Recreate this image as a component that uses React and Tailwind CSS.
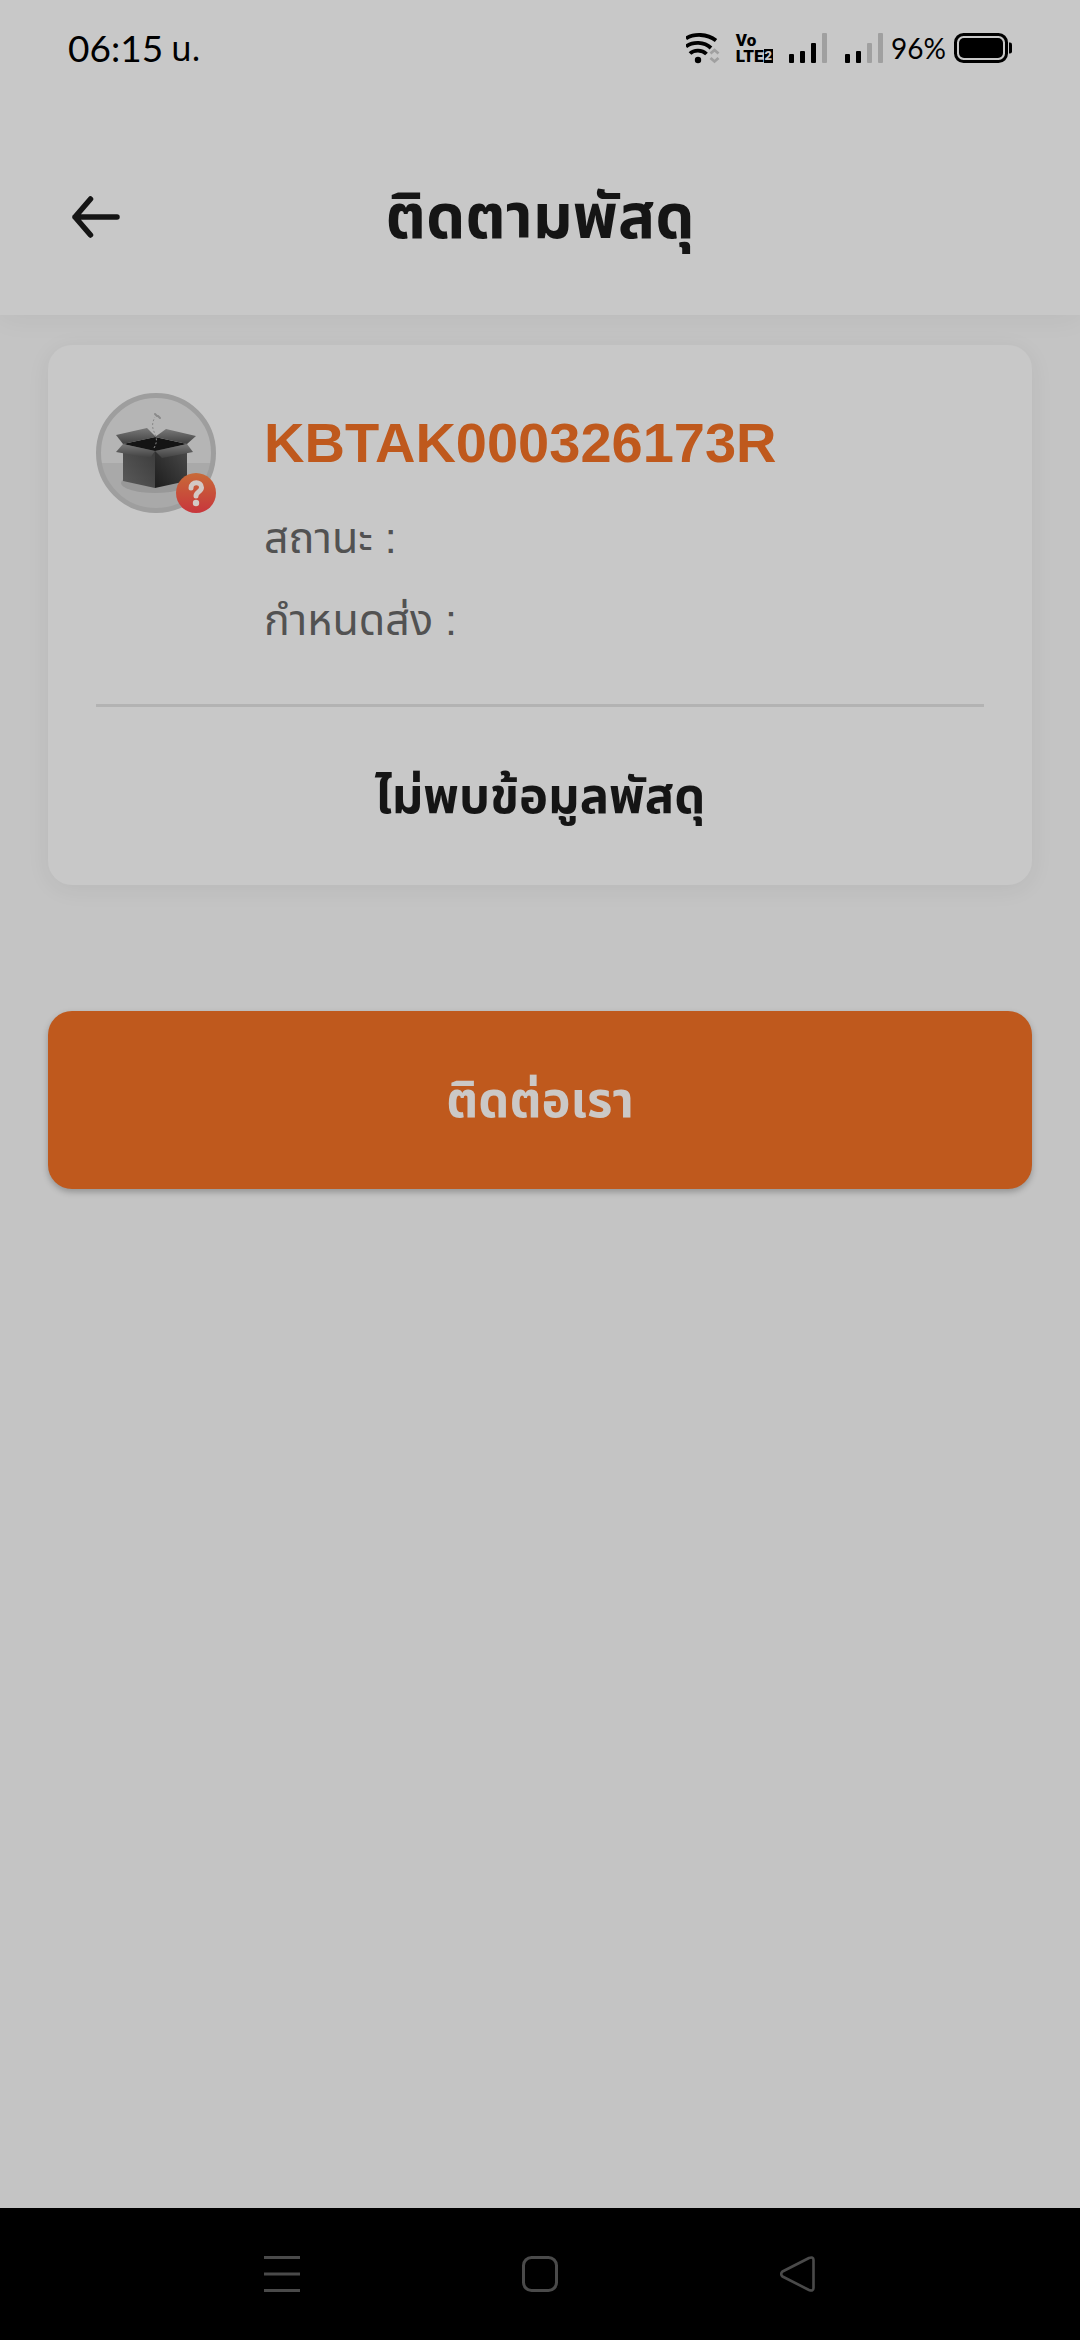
const THAI = "font-['Liberation_Sans','Noto_Sans_Thai','Noto_Sans',sans-serif]";

const WifiIcon = () => (
  <svg width="34" height="31" viewBox="0 0 34 31" fill="none" aria-label="Wi-Fi">
    <g stroke="#000" strokeWidth="3.8">
      <path d="M0 5.5C8 .5 21 .5 30 7.5" />
      <path d="M0 13.5C7 8.5 18 8.5 25 15" />
      <path d="M4 20.5C8 16.5 16 16.5 20.5 21" />
    </g>
    <circle cx="12" cy="27" r="3.2" fill="#000" />
    <path d="M24.5 20.5l4-3.5 4 3.5M24.5 25l4 3.5 4-3.5" stroke="#a0a0a0" strokeWidth="2.8" />
  </svg>
);

const SignalIcon = ({ level }) => {
  const bars = [9, 12, 20, 30];
  return (
    <svg width="38" height="30" viewBox="0 0 38 30" aria-label="Signal">
      {bars.map((h, i) => (
        <rect key={h} x={i * 11} y={30 - h} width="5" height={h} rx="1" fill={i < level ? '#000' : '#a0a0a0'} />
      ))}
    </svg>
  );
};

const BatteryIcon = () => (
  <svg width="58" height="30" viewBox="0 0 58 30" aria-label="Battery">
    <rect x="1.5" y="1.5" width="51" height="27" rx="8" fill="none" stroke="#000" strokeWidth="3" />
    <rect x="5" y="5" width="44" height="20" rx="5" fill="#000" />
    <path d="M55 9.5h1a2 2 0 0 1 2 2v7a2 2 0 0 1-2 2h-1z" fill="#000" />
  </svg>
);

const BackArrow = () => (
  <svg width="48" height="42" viewBox="0 0 48 42" fill="none" stroke="#151515" strokeWidth="5.5" strokeLinecap="round" strokeLinejoin="round">
    <path d="M18.5 3L3 21l15.5 18M3 21h42" />
  </svg>
);

const ParcelIcon = () => (
  <svg width="120" height="120" viewBox="0 0 120 120" aria-label="Parcel">
    <defs>
      <linearGradient id="left" x1="0" y1="1" x2="1" y2="0">
        <stop offset="0" stopColor="#5a5a5a" />
        <stop offset="1" stopColor="#3a3a3a" />
      </linearGradient>
      <linearGradient id="right" x1="1" y1="0" x2="0" y2="1">
        <stop offset="0" stopColor="#4c4c4c" />
        <stop offset="1" stopColor="#1d1d1d" />
      </linearGradient>
      <linearGradient id="flap" x1="0" y1="0" x2="0" y2="1">
        <stop offset="0" stopColor="#787878" />
        <stop offset="1" stopColor="#404040" />
      </linearGradient>
      <linearGradient id="badge" x1="0" y1="0" x2="0" y2="1">
        <stop offset="0" stopColor="#c86a38" />
        <stop offset="1" stopColor="#c8363c" />
      </linearGradient>
      <clipPath id="disc">
        <circle cx="60" cy="60" r="56" />
      </clipPath>
    </defs>
    <g clipPath="url(#disc)">
      <rect width="120" height="120" fill="#b5b5b5" />
      <rect y="70" width="120" height="50" fill="#a9a9a9" />
      <ellipse cx="59" cy="90" rx="34" ry="10" fill="#989898" />
    </g>
    <circle cx="60" cy="60" r="57.5" fill="none" stroke="#9e9e9e" strokeWidth="5" />
    {/* box body */}
    <path d="M27 51l32-7 32 7-32 9z" fill="#141414" />
    <path d="M27 51l32 7v37l-32-7z" fill="url(#left)" />
    <path d="M59 58l32-7v37l-32 7z" fill="url(#right)" />
    {/* flaps */}
    <path d="M20 42l31-7 9 9-33 7z" fill="url(#flap)" />
    <path d="M59 44l11-8 30 7-9 8z" fill="url(#flap)" />
    <path d="M27 51l32 7-5 7-34-6z" fill="url(#flap)" />
    <path d="M91 51l-32 7 7 7 31-6z" fill="url(#flap)" />
    <path d="M58 55c8-14-7-16 1-31" fill="none" stroke="#888" strokeWidth="1" strokeDasharray="2 2" />
    <path d="M59 21l2 2M62 23l2 2" stroke="#8a8a8a" strokeWidth="2" strokeLinecap="round" />
    {/* question badge */}
    <circle cx="100" cy="100" r="20" fill="url(#badge)" />
    <path d="M95 95c0-7 10.5-7 10.5-.5 0 4.5-5.5 4-5.5 8.5" fill="none" stroke="#d3c9c5" strokeWidth="5" strokeLinecap="round" />
    <circle cx="100" cy="110" r="3.2" fill="#d3c9c5" />
  </svg>
);

const StatusBar = () => (
  <div className="flex h-24 items-center justify-between px-17 font-['Lato','Noto_Sans_Thai',sans-serif] text-black">
    <div className="flex items-center gap-2 text-[37px] leading-10">
      <span>06:15</span>
      <span className="text-[34px]">น.</span>
    </div>
    <div className="flex items-center">
      <WifiIcon />
      <div className="ml-4 font-['Roboto','Liberation_Sans',sans-serif] text-[17px] font-black leading-4">
        <div>Vo</div>
        <div className="flex items-center">
          LTE
          <span className="bg-black px-px text-[13px] leading-3.5 text-[#c8c8c8]">2</span>
        </div>
      </div>
      <div className="ml-4 flex gap-[18px]">
        <SignalIcon level={3} />
        <SignalIcon level={2} />
      </div>
      <span className="mx-2 text-[28px] leading-8">96%</span>
      <BatteryIcon />
    </div>
  </div>
);

const Header = () => (
  <header className="grid grid-cols-[1fr_auto_1fr] items-center px-18 pt-[73px] pb-[50px]">
    <button aria-label="Back" className="justify-self-start">
      <BackArrow />
    </button>
    <h1 className="text-[62px] font-bold leading-24 text-[#151515]">ติดตามพัสดุ</h1>
  </header>
);

const NavBar = () => (
  <nav className="flex h-33 items-center justify-center gap-[222px] bg-black text-[#4a4a4a]">
    <button aria-label="Recent apps">
      <svg width="36" height="36" viewBox="0 0 36 36" stroke="currentColor" strokeWidth="3">
        <path d="M0 1.5h36M0 18h36M0 34.5h36" />
      </svg>
    </button>
    <button aria-label="Home">
      <svg width="36" height="36" viewBox="0 0 36 36" fill="none" stroke="currentColor" strokeWidth="3">
        <rect x="1.5" y="1.5" width="33" height="33" rx="8" />
      </svg>
    </button>
    <button aria-label="Back">
      <svg width="36" height="36" viewBox="0 0 36 36" fill="none" stroke="currentColor" strokeWidth="2.6" strokeLinejoin="round">
        <path d="M2.5 15.5L29 2Q33.5 .5 33.5 4v28q0 3.5-4.5 2L2.5 20.5q-2.5-2.5 0-5z" />
      </svg>
    </button>
  </nav>
);

export default function App() {
  return (
    <div className={`flex min-h-screen flex-col bg-[#c4c4c4] ${THAI}`}>
      <div className="bg-[#c8c8c8] shadow-[0_0_30px_rgba(0,0,0,0.06)]">
        <StatusBar />
        <Header />
      </div>

      <main className="flex-1 px-12 pt-[30px]">
        <section className="rounded-3xl bg-[#c8c8c8] px-12 pt-12 shadow-[0_4px_24px_rgba(0,0,0,0.06)]">
          <div className="flex gap-12 border-b-3 border-[#b3b3b3] pb-[43px]">
            <div className="shrink-0">
              <ParcelIcon />
            </div>
            <div className="pt-4">
              <h2 className="text-[56px] font-bold leading-17 text-[#bf591d]">KBTAK000326173R</h2>
              <div className="pt-5 text-[43px] leading-[82px] text-[#525252]">
                <p>สถานะ :</p>
                <p>กำหนดส่ง :</p>
              </div>
            </div>
          </div>
          <p className="py-12 text-center text-[49px] font-bold leading-[82px] text-[#151515]">ไม่พบข้อมูลพัสดุ</p>
        </section>

        <button className="mt-[126px] w-full rounded-3xl bg-[#bf591d] py-12 text-[49px] font-bold leading-[82px] text-[#cbc8c6] shadow-[0_3px_6px_rgba(0,0,0,0.25)]">
          ติดต่อเรา
        </button>
      </main>

      <NavBar />
    </div>
  );
}
